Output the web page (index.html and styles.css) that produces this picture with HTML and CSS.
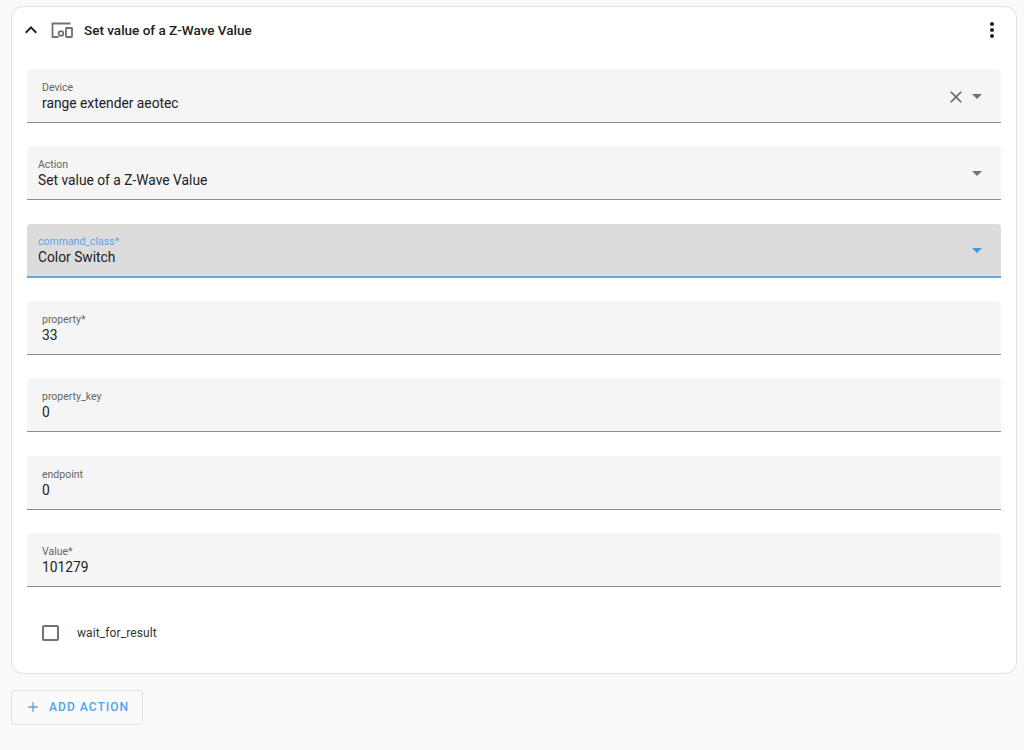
FILE: index.html
```html
<!DOCTYPE html>
<html lang="en">
  <head>
    <meta charset="UTF-8" />
    <title>Set value of a Z-Wave Value</title>
    <link rel="stylesheet" href="styles.css">
  </head>
  <body>
    <!-- Action card -->
    <div class="card">
      <div class="card-header">
        <svg class="chevron" viewBox="0 0 24 24" width="24" height="24"><path d="M7.41 15.41 12 10.83l4.59 4.58L18 14l-6-6-6 6z"/></svg>
        <svg class="device-icon" viewBox="0 0 22 16" width="22" height="16">
          <path d="M19.5 1.5H1.5v13.5h6"/>
          <circle cx="10" cy="11.5" r="2.3"/>
          <rect x="15" y="6" width="6" height="9" rx="0.5"/>
        </svg>
        <div class="card-title">Set value of a Z-Wave Value</div>
        <svg class="menu-icon" viewBox="0 0 24 24" width="24" height="24"><path d="M12 16a2 2 0 1 1 0 4 2 2 0 0 1 0-4zm0-6a2 2 0 1 1 0 4 2 2 0 0 1 0-4zm0-6a2 2 0 1 1 0 4 2 2 0 0 1 0-4z"/></svg>
      </div>

      <div class="fields">
        <div class="field wide-pad">
          <div class="field-text">
            <div class="field-label">Device</div>
            <div class="field-value">range extender aeotec</div>
          </div>
          <svg class="clear-icon" viewBox="0 0 24 24" width="24" height="24"><path d="M19 6.41 17.59 5 12 10.59 6.41 5 5 6.41 10.59 12 5 17.59 6.41 19 12 13.41 17.59 19 19 17.59 13.41 12z"/></svg>
          <div class="arrow"></div>
        </div>

        <div class="field">
          <div class="field-text">
            <div class="field-label">Action</div>
            <div class="field-value">Set value of a Z-Wave Value</div>
          </div>
          <div class="arrow"></div>
        </div>

        <div class="field focused">
          <div class="field-text">
            <div class="field-label">command_class*</div>
            <div class="field-value">Color Switch</div>
          </div>
          <div class="arrow"></div>
        </div>

        <div class="field wide-pad">
          <div class="field-text">
            <div class="field-label">property*</div>
            <div class="field-value">33</div>
          </div>
        </div>

        <div class="field wide-pad">
          <div class="field-text">
            <div class="field-label">property_key</div>
            <div class="field-value">0</div>
          </div>
        </div>

        <div class="field wide-pad">
          <div class="field-text">
            <div class="field-label">endpoint</div>
            <div class="field-value">0</div>
          </div>
        </div>

        <div class="field wide-pad">
          <div class="field-text">
            <div class="field-label">Value*</div>
            <div class="field-value">101279</div>
          </div>
        </div>
      </div>

      <div class="check-row">
        <div class="checkbox"></div>
        <div class="check-label">wait_for_result</div>
      </div>
    </div>

    <div class="add-action">
      <svg class="plus-icon" viewBox="0 0 24 24" width="16" height="16"><path d="M19 13h-6v6h-2v-6H5v-2h6V5h2v6h6v2z"/></svg>
      <span>ADD ACTION</span>
    </div>
  </body>
</html>
```

FILE: styles.css
```css
/* Page */
html,
body {
  margin: 0;
  padding: 0;
  height: 100%;
  overflow: hidden;
}

body {
  background: #fafafa;
  font-family: Roboto, "Liberation Sans", sans-serif;
  color: #212121;
  padding: 6px 7px 0 11px;
  box-sizing: border-box;
}

/* Action card */
.card {
  background: #fff;
  border: 1px solid #e0e0e0;
  border-radius: 12px;
  height: 668px;
  box-sizing: border-box;
}

.card-header {
  display: flex;
  align-items: center;
  height: 45px;
  padding: 0 12px 0 7px;
}

.chevron {
  fill: #212121;
  margin-right: 8px;
}

.device-icon {
  fill: none;
  stroke: #727272;
  stroke-width: 1.8;
  margin-right: 11px;
}

.card-title {
  flex: 1;
  font-size: 13.5px;
  font-weight: 500;
}

.menu-icon {
  fill: #212121;
}

/* Form fields */
.fields {
  display: flex;
  flex-direction: column;
  gap: 23.33px;
  margin: 17px 15px 0;
}

.field {
  display: flex;
  align-items: center;
  height: 54px;
  box-sizing: border-box;
  padding: 0 11px 0 11px;
  background: #f5f5f5;
  border-bottom: 1px solid #8c8c8c;
  border-radius: 4px 4px 0 0;
}

.field.wide-pad {
  padding-left: 15px;
}

.field.focused {
  background: #dcdcdc;
  border-bottom: 2px solid #5eaaef;
}

.field-text {
  flex: 1;
  padding-top: 2px;
}

.field-label {
  font-size: 10.5px;
  line-height: 14px;
  margin-bottom: -1px;
  color: #666;
}

.focused .field-label {
  color: #5ba5e8;
}

.field-value {
  font-size: 13.8px;
  line-height: 18px;
  color: #212121;
}

.clear-icon {
  width: 20px;
  height: 20px;
  fill: #6b6b6b;
  margin-right: 6px;
  margin-top: 2px;
}

.arrow {
  width: 0;
  height: 0;
  border-left: 5px solid transparent;
  border-right: 5px solid transparent;
  border-top: 5px solid #727272;
  margin-right: 8px;
  margin-top: 1px;
}

.focused .arrow {
  border-top-color: #3f97e6;
}

/* Checkbox row */
.check-row {
  display: flex;
  align-items: center;
  margin: 38px 0 0 30px;
}

.checkbox {
  width: 16.5px;
  height: 16.5px;
  box-sizing: border-box;
  border: 2px solid #727272;
  border-radius: 2px;
}

.check-label {
  font-size: 12px;
  letter-spacing: 0.1px;
  color: #333;
  margin-left: 18.5px;
}

/* Add action button */
.add-action {
  display: inline-flex;
  align-items: center;
  height: 34.5px;
  box-sizing: border-box;
  margin-top: 16px;
  padding: 0 13px;
  background: #fafafa;
  border: 1px solid #e0e0e0;
  border-radius: 4px;
  color: #4ca3ee;
  font-size: 12px;
  font-weight: 500;
  letter-spacing: 1.05px;
}

.plus-icon {
  fill: #4ca3ee;
  width: 16px;
  height: 16px;
  margin-right: 8px;
}
```
